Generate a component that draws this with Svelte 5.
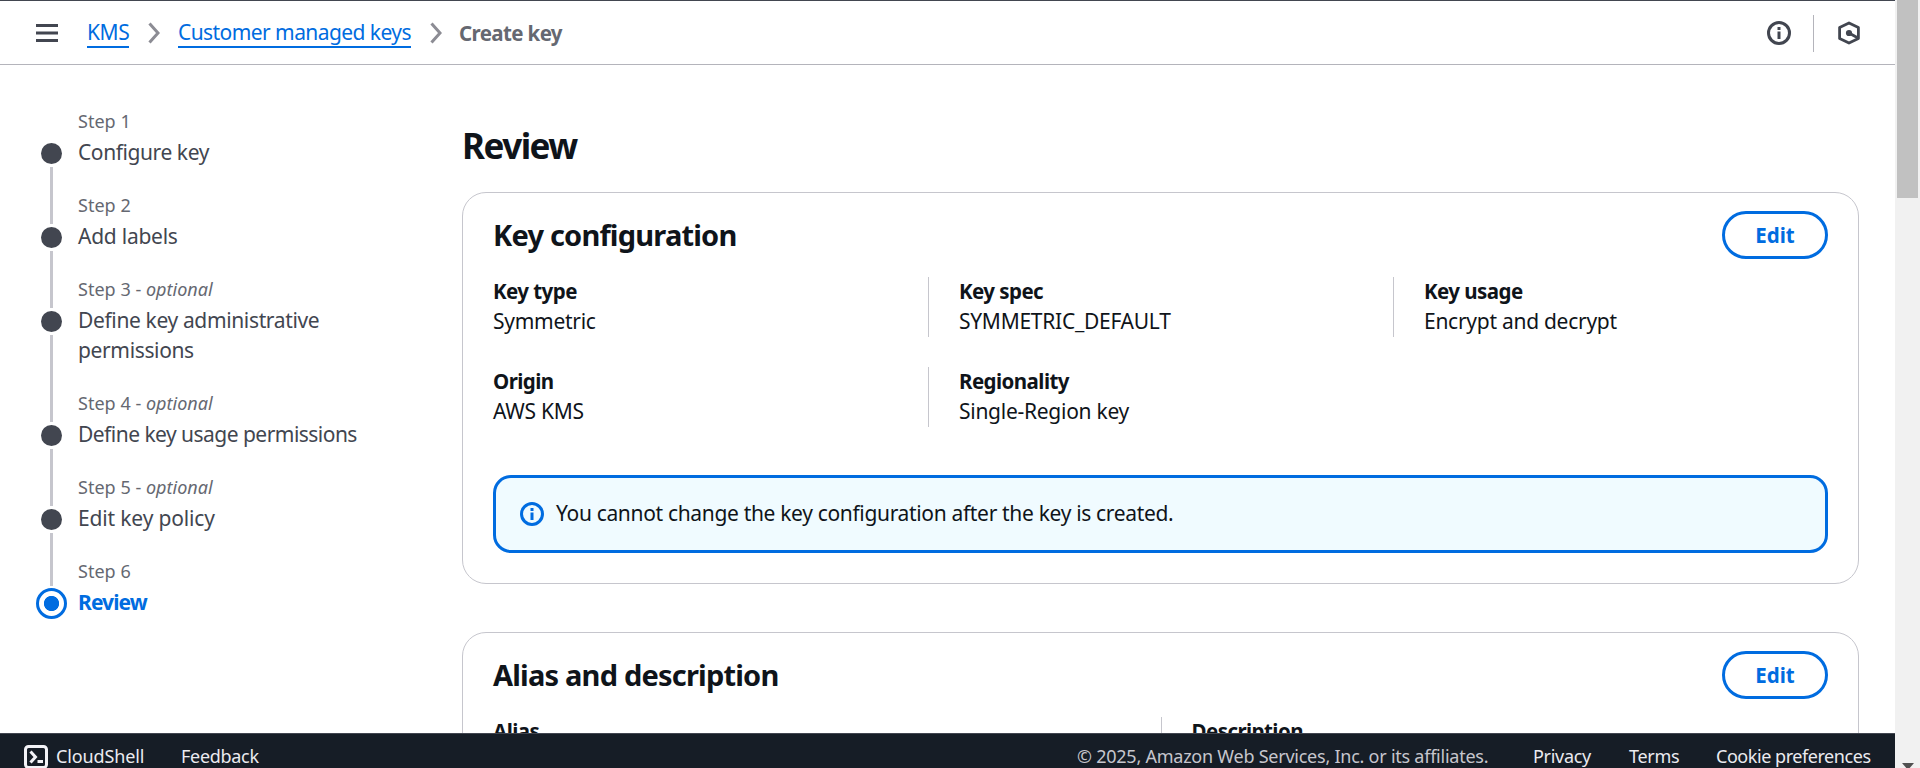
<script>
  const steps = [
    { n: 'Step 1', label: 'Configure key', track: -0.42 },
    { n: 'Step 2', label: 'Add labels', track: -0.25 },
    { n: 'Step 3', optional: true, label: 'Define key administrative permissions', track: -0.36 },
    { n: 'Step 4', optional: true, label: 'Define key usage permissions', track: -0.53 },
    { n: 'Step 5', optional: true, label: 'Edit key policy', track: -0.15 },
    { n: 'Step 6', label: 'Review', current: true, track: -0.9 }
  ];
  const config = [
    ['Key type', 'Symmetric'],
    ['Key spec', 'SYMMETRIC_DEFAULT'],
    ['Key usage', 'Encrypt and decrypt'],
    ['Origin', 'AWS KMS'],
    ['Regionality', 'Single-Region key']
  ];
</script>

{#snippet info()}
  <svg class="info" width="24" height="24" viewBox="0 0 24 24" fill="none" stroke="currentColor" stroke-width="3">
    <circle cx="12" cy="12" r="10.5" />
    <path d="M12 6v3M12 10.5v7.5" />
  </svg>
{/snippet}

{#snippet chevron()}
  <svg class="chevron" width="12" height="22" viewBox="0 0 12 22" fill="none" stroke="#8c8c94" stroke-width="3">
    <path d="M1.5 1.5l8.5 9.5-8.5 9.5" />
  </svg>
{/snippet}

<div class="page">
  <div class="app">
    <header>
      <svg width="22" height="18" viewBox="0 0 22 18" fill="#424650">
        <path d="M0 0h22v3H0zM0 7.5h22v3H0zM0 15h22v3H0z" />
      </svg>
      <nav class="crumbs">
        <span class="link kms">KMS</span>
        {@render chevron()}
        <span class="link keys">Customer managed keys</span>
        {@render chevron()}
        <b>Create key</b>
      </nav>
      <div class="tools">
        {@render info()}
        <i class="rule"></i>
        <svg width="24" height="24" viewBox="0 0 24 24" fill="none" stroke="currentColor" stroke-width="2.8" stroke-linejoin="round">
          <path d="M12 2l9.4 4.6v10.8L12 22l-9.4-4.6V6.6z" />
          <circle cx="12" cy="12" r="3.1" fill="currentColor" stroke="none" />
          <path d="M12 12l9 5" />
        </svg>
      </div>
    </header>

    <div class="body">
      <ol class="steps">
        {#each steps as s, i}
          <li class:current={s.current}>
            <div class="marker">
              <i class="seg top" class:hidden={i === 0}></i>
              <i class="dot"></i>
              {#if !s.current}<i class="seg rest"></i>{/if}
            </div>
            <div class="text">
              <div class="num">{s.n}{#if s.optional}{' - '}<em>optional</em>{/if}</div>
              <div class="label" style:letter-spacing="{s.track}px">{s.label}</div>
            </div>
          </li>
        {/each}
      </ol>

      <main>
        <h1>Review</h1>
        <section class="card first">
          <div class="head"><h2>Key configuration</h2><button>Edit</button></div>
          <div class="grid three">
            {#each config as [k, v], i}
              <div class="cell" class:ruled={i % 3 !== 0}>
                <b>{k}</b>
                <span>{v}</span>
              </div>
            {/each}
          </div>
          <div class="alert">{@render info()}<span>You cannot change the key configuration after the key is created.</span></div>
        </section>
        <section class="card">
          <div class="head"><h2>Alias and description</h2><button>Edit</button></div>
          <div class="grid two">
            <div class="cell"><b>Alias</b></div>
            <div class="cell ruled"><b>Description</b></div>
          </div>
        </section>
      </main>
    </div>

    <footer>
      <svg width="24" height="24" viewBox="0 0 24 24" fill="none" stroke="#f3f3f7" stroke-width="3">
        <rect x="1.5" y="1.5" width="21" height="21" rx="3" />
        <path d="M6.5 6.5l5 5.5-5 5.5M13.5 16.5h5.5" />
      </svg>
      <span class="shell">CloudShell</span>
      <span class="feedback">Feedback</span>
      <span class="copy">© 2025, Amazon Web Services, Inc. or its affiliates.</span>
      <span class="privacy">Privacy</span>
      <span class="terms">Terms</span>
      <span class="cookie">Cookie preferences</span>
    </footer>
  </div>
  <div class="scrollbar">
    <div class="thumb"></div>
    <svg width="12" height="7" viewBox="0 0 12 7"><path d="M0 0h12L6 7z" fill="#505050" /></svg>
  </div>
</div>

<style>
  :global(body) { margin: 0; background: #fff; overflow: hidden; }
  .page { display: flex; width: 1920px; height: 768px; overflow: hidden; font: 21px/30px "Noto Sans", "Open Sans", sans-serif; color: #0f141a; letter-spacing: -0.27px; }
  .app { width: 1895px; height: 768px; display: flex; flex-direction: column; overflow: hidden; }
  svg { display: block; flex: none; }
  b, h1, h2, button { font-weight: 700; }
  header { flex: none; box-sizing: border-box; height: 65px; border-top: 1px solid #424650; border-bottom: 1px solid #b4b4bb; display: flex; align-items: center; padding: 1px 34px 0 36px; color: #424650; }
  .crumbs { display: flex; align-items: center; margin-left: 29px; color: #656871; white-space: nowrap; }
  .crumbs .chevron { margin: 0 18px 0 19px; }
  .link { color: #006ce0; border-bottom: 2px solid #006ce0; line-height: 28px; }
  .kms { width: 42px; letter-spacing: -0.42px; }
  .keys { width: 233px; letter-spacing: -0.57px; }
  .crumbs b { font-size: 20.5px; letter-spacing: -0.62px; margin: -1px 0 0 -1px; }
  .tools { margin-left: auto; display: flex; align-items: center; }
  .rule { width: 1px; height: 37px; background: #b4b4bb; margin: 0 23px 0 22px; }
  .body { flex: 1; min-height: 0; overflow: hidden; display: flex; }
  .steps { list-style: none; margin: 0; padding: 43px 0 0 36px; width: 462px; box-sizing: border-box; flex: none; }
  .steps li { display: flex; gap: 11px; }
  .marker { width: 31px; display: flex; flex-direction: column; align-items: center; }
  .seg { width: 3px; background: #c6c6cd; }
  .seg.top { height: 32px; margin-bottom: 3px; }
  .hidden { visibility: hidden; }
  .dot { width: 21px; height: 21px; border-radius: 50%; background: #424650; }
  .seg.rest { flex: 1; margin-top: 3px; }
  .current .seg.top { height: 28px; margin-bottom: 2px; }
  .current .dot { box-sizing: border-box; width: 31px; height: 31px; border: 3px solid #006ce0; background: radial-gradient(circle, #006ce0 7.2px, #fff 8px); }
  .text { width: 284px; padding-bottom: 25px; color: #424650; }
  .num { font-size: 18px; line-height: 26px; padding-bottom: 3px; color: #656871; letter-spacing: 0.02px; }
  .current .label { color: #006ce0; font-weight: 700; }
  main { width: 1397px; flex: none; padding-top: 58px; }
  h1 { margin: 0 0 24px; font-size: 35px; line-height: 45px; letter-spacing: -1.5px; }
  .card { box-sizing: border-box; border: 1px solid #c6c6cd; border-radius: 24px; padding: 18px 30px 30px; }
  .first { height: 392px; margin-bottom: 48px; }
  .head { display: flex; justify-content: space-between; align-items: center; height: 48px; }
  h2 { margin: -1px 0 0; font-size: 29px; line-height: 36px; letter-spacing: -0.8px; }
  button { box-sizing: border-box; width: 106px; height: 48px; border: 3px solid #006ce0; border-radius: 30px; background: #fff; color: #006ce0; font-family: inherit; font-size: 20.5px; line-height: 30px; padding: 0; letter-spacing: 0; }
  .grid { display: grid; column-gap: 60px; row-gap: 30px; margin-top: 18px; }
  .three { grid-template-columns: repeat(3, 1fr); }
  .two { grid-template-columns: repeat(2, 1fr); height: 60px; }
  .cell { display: flex; flex-direction: column; height: 60px; }
  .cell b { font-size: 20.5px; line-height: 29px; letter-spacing: -0.55px; }
  .ruled { border-left: 1px solid #c6c6cd; margin-left: -30px; padding-left: 30px; }
  .alert { box-sizing: border-box; height: 78px; margin-top: 48px; border: 3px solid #006ce0; border-radius: 18px; background: #f0fbff; display: flex; align-items: center; padding-left: 24px; gap: 12px; }
  .alert span { letter-spacing: -0.33px; margin-top: -2px; }
  .alert .info { color: #006ce0; }
  footer { flex: none; box-sizing: border-box; height: 35px; border-top: 1px solid #424650; background: #161d26; color: #ebebf0; display: flex; align-items: flex-start; padding: 11px 24px 0; font-size: 18px; line-height: 22px; letter-spacing: -0.3px; white-space: nowrap; }
  .shell { margin-left: 8px; width: 125px; letter-spacing: -0.12px; line-height: 23px; }
  .copy { margin-left: auto; width: 456px; color: #c6c6cd; letter-spacing: -0.24px; }
  .privacy { width: 96px; }
  .terms { width: 87px; }
  .cookie { width: 155px; letter-spacing: -0.45px; }
  .scrollbar { width: 25px; background: #f1f1f1; display: flex; flex-direction: column; justify-content: space-between; align-items: center; }
  .thumb { width: 21px; height: 198px; background: #c1c1c1; }
  .scrollbar svg { margin-bottom: -2px; }
</style>
